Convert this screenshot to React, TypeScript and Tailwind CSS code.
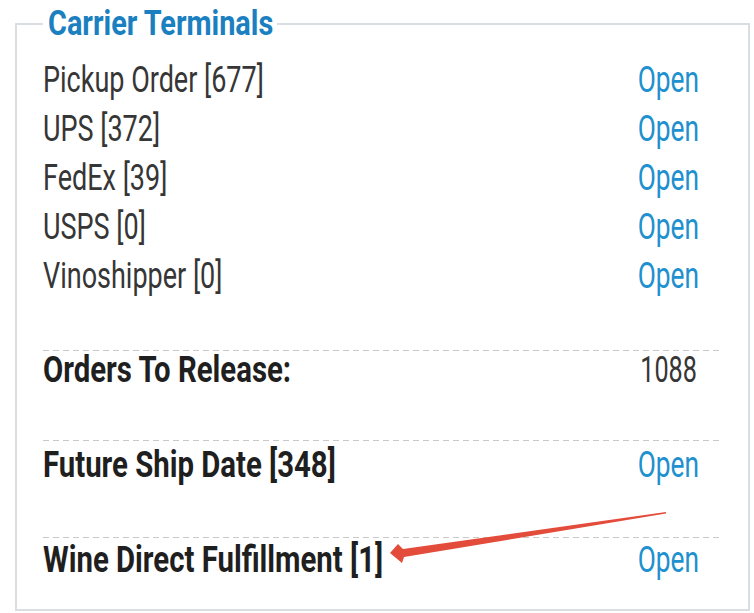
const carriers = [
  { name: 'Pickup Order', count: 677 },
  { name: 'UPS', count: 372 },
  { name: 'FedEx', count: 39 },
  { name: 'USPS', count: 0 },
  { name: 'Vinoshipper', count: 0 },
]

const font = { fontFamily: 'Roboto, "Liberation Sans", sans-serif' }

function Label({ text, bold }: { text: string; bold?: boolean }) {
  return (
    <span
      className={
        'inline-block origin-left whitespace-nowrap ' +
        (bold ? 'scale-x-[0.815] font-bold text-[#1f1f1f]' : 'scale-x-[0.75] text-[#363636]')
      }
    >
      {text}
    </span>
  )
}

function OpenLink() {
  return (
    <a href="#" className="inline-block origin-right scale-x-[0.73] text-[#2190cf]">
      Open
    </a>
  )
}

function Dashed() {
  return <div className="h-px bg-[repeating-linear-gradient(to_right,#c9c9c9_0_6px,transparent_6px_10px)]" />
}

export default function App() {
  return (
    <div className="relative h-[613px] w-[754px] overflow-hidden bg-white" style={font}>
      <fieldset className="ml-[15px] mt-[4px] w-[735px] border-2 border-[#d9dee3] pb-[22px] pl-[26px] pr-[28px] pt-[12px]">
        <legend className="px-[5px] text-[35px] font-bold leading-[40px] text-[#1a80bf]">
          <span className="inline-block w-[224px] origin-left scale-x-[0.825] whitespace-nowrap">Carrier Terminals</span>
        </legend>

        <div className="text-[36px] leading-[49px]">
          {carriers.map((c) => (
            <div key={c.name} className="flex items-center justify-between pr-[21px]">
              <Label text={`${c.name} [${c.count}]`} />
              <OpenLink />
            </div>
          ))}

          <div className="mt-[49px]">
            <Dashed />
            <div className="-mt-[5px] flex items-center justify-between pb-[5px] pr-[23px]">
              <Label text="Orders To Release:" bold />
              <span className="inline-block origin-right scale-x-[0.7] text-[#363636]">1088</span>
            </div>
          </div>

          <div className="mt-[40px]">
            <Dashed />
            <div className="flex items-center justify-between pr-[21px]">
              <Label text="Future Ship Date [348]" bold />
              <OpenLink />
            </div>
          </div>

          <div className="mt-[47px]">
            <Dashed />
            <div className="-mt-[2px] flex items-center justify-between pb-[2px] pr-[21px]">
              <Label text="Wine Direct Fulfillment [1]" bold />
              <OpenLink />
            </div>
          </div>
        </div>
      </fieldset>

      <svg className="pointer-events-none absolute left-0 top-0" width="754" height="613" viewBox="0 0 754 613">
        <polygon
          points="666,512 666,513.5 404,557 402,563 390,553 398,544 403,549"
          fill="#e34b3b"
        />
      </svg>
    </div>
  )
}
